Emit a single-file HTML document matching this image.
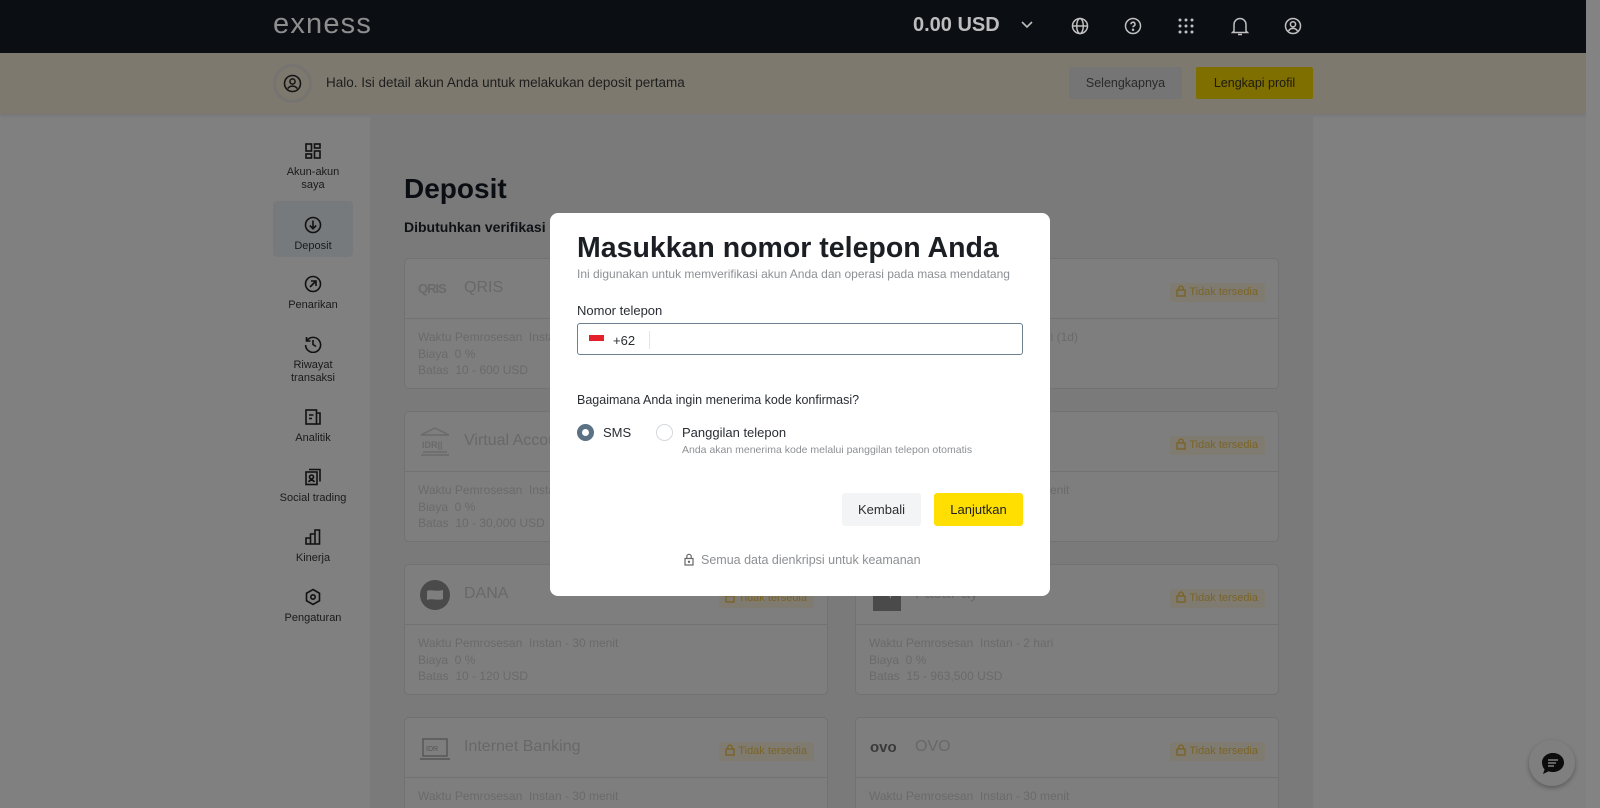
<!DOCTYPE html>
<html style="width:1600px;height:808px;overflow:hidden"><head><meta charset="utf-8"><style>
*{box-sizing:border-box;margin:0;padding:0}
body{width:1600px;height:808px;overflow:hidden;position:relative;background:#808080;font-family:"Liberation Sans",Arial,sans-serif}
.a{position:absolute}
.hdr{left:0;top:0;width:1586px;height:53px;background:#0b0e13}
.ban{left:0;top:53px;width:1586px;height:61px;background:#7d796f;box-shadow:0 2px 3px rgba(0,0,0,.08)}
.main{left:370px;top:114px;width:943px;height:694px;background:#7a7a7a}
.sb{left:1586px;top:0;width:14px;height:808px;background:#838383}
.nav{width:90px;left:268px;text-align:center;font-size:11px;color:#1a1a1a;line-height:13px}
.nav svg{display:block;margin:0 auto 6px}
.card{width:424px;height:131px;border:1px solid #727272;border-radius:5px;background:#7e7e7e}
.card .h{position:absolute;left:0;top:0;right:0;height:60px;border-bottom:1px solid #727272}
.card .t{position:absolute;left:59px;top:20px;font-size:16px;color:#686868}
.card .ic{position:absolute;left:13px;top:14px;width:34px;height:32px}
.card .b{position:absolute;left:13px;top:70px;font-size:12px;color:#6a6a6a;line-height:16.5px}
.tag{position:absolute;right:13px;top:24px;height:19px;padding:0 7px 0 6px;background:#7f7b70;border-radius:3px;color:#7a6428;font-size:11px;line-height:19px}
.tag svg{vertical-align:-2px;margin-right:3px}
.modal{left:550px;top:213px;width:500px;height:383px;background:#fff;border-radius:8px}
</style></head><body>
<div class="a hdr"></div>
<div class="a" style="left:273px;top:8px;font-size:29px;color:#8e8e8e;letter-spacing:1.2px">exness</div>
<div class="a" style="left:913px;top:14px;font-size:20px;font-weight:bold;color:#bdbdbd">0.00 USD</div>
<svg class="a" style="left:1020px;top:20px" width="14" height="10" viewBox="0 0 14 10"><path d="M2 2l5 5 5-5" fill="none" stroke="#bdbdbd" stroke-width="1.6"/></svg>
<svg class="a" style="left:1071px;top:17px" width="18" height="18" viewBox="0 0 18 18" fill="none" stroke="#c0c0c0" stroke-width="1.5"><circle cx="9" cy="9" r="7.5"/><ellipse cx="9" cy="9" rx="3.3" ry="7.5"/><path d="M1.5 9h15"/></svg>
<svg class="a" style="left:1124px;top:17px" width="18" height="18" viewBox="0 0 18 18" fill="none" stroke="#c0c0c0" stroke-width="1.5"><circle cx="9" cy="9" r="7.5"/><path d="M7 7.2a2 2 0 1 1 2.6 1.9c-.5.2-.6.6-.6 1.2"/><circle cx="9" cy="12.7" r=".5" fill="#c0c0c0"/></svg>
<svg class="a" style="left:1178px;top:18px" width="16" height="16" viewBox="0 0 16 16" fill="#c0c0c0"><circle cx="2" cy="2" r="1.5"/><circle cx="8" cy="2" r="1.5"/><circle cx="14" cy="2" r="1.5"/><circle cx="2" cy="8" r="1.5"/><circle cx="8" cy="8" r="1.5"/><circle cx="14" cy="8" r="1.5"/><circle cx="2" cy="14" r="1.5"/><circle cx="8" cy="14" r="1.5"/><circle cx="14" cy="14" r="1.5"/></svg>
<svg class="a" style="left:1231px;top:16px" width="18" height="20" viewBox="0 0 18 20" fill="none" stroke="#c0c0c0" stroke-width="1.5"><path d="M3 15V8.5a6 6 0 0 1 12 0V15l1.5 1.5h-15z"/><path d="M7 18.5h4"/></svg>
<svg class="a" style="left:1284px;top:17px" width="18" height="18" viewBox="0 0 18 18" fill="none" stroke="#c0c0c0" stroke-width="1.5"><circle cx="9" cy="9" r="7.5"/><circle cx="9" cy="7.3" r="2.6"/><path d="M4.5 14c1.2-2 2.7-2.6 4.5-2.6s3.3.6 4.5 2.6"/></svg>

<div class="a ban"></div>
<svg class="a" style="left:273px;top:64px" width="39" height="39" viewBox="0 0 39 39" fill="none"><circle cx="19.5" cy="19.5" r="18" stroke="#767470" stroke-width="3"/><circle cx="19.5" cy="19.5" r="8" stroke="#151515" stroke-width="1.6"/><circle cx="19.5" cy="17.5" r="2.6" stroke="#151515" stroke-width="1.5"/><path d="M14.8 24.5c1.3-1.8 2.8-2.4 4.7-2.4s3.4.6 4.7 2.4" stroke="#151515" stroke-width="1.5"/></svg>
<div class="a" style="left:326px;top:75px;font-size:13.5px;color:#1e1e1e">Halo. Isi detail akun Anda untuk melakukan deposit pertama</div>
<div class="a" style="left:1069px;top:67px;width:113px;height:32px;background:#757575;border-radius:2px;font-size:12.5px;color:#2a2a2a;text-align:center;line-height:32px">Selengkapnya</div>
<div class="a" style="left:1196px;top:67px;width:117px;height:32px;background:#7f6e00;border-radius:2px;font-size:12.5px;color:#1c1a10;text-align:center;line-height:32px">Lengkapi profil</div>

<div class="a main"></div>
<div class="a sb"></div>

<div class="a" style="left:273px;top:201px;width:80px;height:56px;background:#777a7d;border-radius:4px"></div>
<div class="a nav" style="top:142px"><svg width="18" height="18" viewBox="0 0 18 18" fill="none" stroke="#111" stroke-width="1.6"><rect x="2" y="2" width="5.5" height="7"/><rect x="10.5" y="2" width="5.5" height="4"/><rect x="2" y="12" width="5.5" height="4"/><rect x="10.5" y="9" width="5.5" height="7"/></svg>Akun-akun<br>saya</div>
<div class="a nav" style="top:216px"><svg width="18" height="18" viewBox="0 0 18 18" fill="none" stroke="#111" stroke-width="1.6"><circle cx="9" cy="9" r="7.5"/><path d="M9 4.5v8M5.8 9.5 9 12.7l3.2-3.2"/></svg>Deposit</div>
<div class="a nav" style="top:275px"><svg width="18" height="18" viewBox="0 0 18 18" fill="none" stroke="#111" stroke-width="1.6"><circle cx="9" cy="9" r="7.5"/><path d="M6 12l6-6M7 6h5v5"/></svg>Penarikan</div>
<div class="a nav" style="top:335px"><svg width="18" height="18" viewBox="0 0 18 18" fill="none" stroke="#111" stroke-width="1.6"><path d="M3 5.5A7.5 7.5 0 1 1 1.6 10"/><path d="M2.5 2v4h4"/><path d="M9 5v4.5l3 2"/></svg>Riwayat<br>transaksi</div>
<div class="a nav" style="top:408px"><svg width="18" height="18" viewBox="0 0 18 18" fill="none" stroke="#111" stroke-width="1.6"><rect x="2" y="2" width="10.5" height="14"/><path d="M12.5 5H16v11h-3.5M5 7h4.5M5 10.5h3"/></svg>Analitik</div>
<div class="a nav" style="top:468px"><svg width="18" height="18" viewBox="0 0 18 18" fill="none" stroke="#111" stroke-width="1.6"><rect x="2" y="4" width="11" height="12.5"/><path d="M5 1.5h11v12"/><circle cx="7.5" cy="9" r="2"/><path d="M4.5 14c.8-1.3 1.8-1.8 3-1.8s2.2.5 3 1.8"/></svg>Social trading</div>
<div class="a nav" style="top:528px"><svg width="18" height="18" viewBox="0 0 18 18" fill="none" stroke="#111" stroke-width="1.6"><path d="M2 16V10h4.5v6zM6.5 16V6H11v10zM11 16V2h4.5v14z"/></svg>Kinerja</div>
<div class="a nav" style="top:588px"><svg width="18" height="18" viewBox="0 0 18 18" fill="none" stroke="#111" stroke-width="1.6"><path d="M9 1.5l6.5 3.75v7.5L9 16.5l-6.5-3.75v-7.5z"/><circle cx="9" cy="9" r="2.2"/></svg>Pengaturan</div>

<div class="a" style="left:404px;top:173px;font-size:28px;font-weight:bold;color:#0a0d12">Deposit</div>
<div class="a" style="left:404px;top:219px;font-size:14px;font-weight:bold;color:#0e1115">Dibutuhkan verifikasi</div>

<div class="a" style="left:0;top:0;width:1600px;height:808px;overflow:hidden">
<div class="a card" style="left:404px;top:258px"><div class="h"></div><div class="ic" style="font-size:13px;font-weight:bold;color:#6a6a6a;top:22px;letter-spacing:-1px">QRIS</div><div class="t">QRIS</div><div class="b">Waktu Pemrosesan&nbsp; Instan - 30 menit<br>Biaya&nbsp; 0 %<br>Batas&nbsp; 10 - 600 USD</div></div>
<div class="a card" style="left:855px;top:258px"><div class="h"></div><div class="t">Transfer Bank (20)</div><div class="tag"><svg width="10" height="12" viewBox="0 0 10 12" fill="none" stroke="#7a6428" stroke-width="1.4"><rect x="1" y="5" width="8" height="6"/><path d="M2.8 5V3.3a2.2 2.2 0 0 1 4.4 0V5"/></svg>Tidak tersedia</div><div class="b">Waktu Pemrosesan&nbsp; Instan - 1 hari (1d)<br>Biaya&nbsp; 0 %<br>Batas&nbsp; 10 - 30,000 USD</div></div>

<div class="a card" style="left:404px;top:411px"><div class="h"></div><svg class="ic" viewBox="0 0 34 32" fill="none" stroke="#6a6a6a" stroke-width="1.4"><path d="M3 9L17 2l14 7z M3 29h28M5 26h24"/><text x="4" y="22" font-size="9" font-weight="bold" fill="#6a6a6a" stroke="none" font-family="Liberation Sans">IDR||</text></svg><div class="t">Virtual Account</div><div class="b">Waktu Pemrosesan&nbsp; Instan - 30 menit<br>Biaya&nbsp; 0 %<br>Batas&nbsp; 10 - 30,000 USD</div></div>
<div class="a card" style="left:855px;top:411px"><div class="h"></div><div class="t">Bank Transfer</div><div class="tag"><svg width="10" height="12" viewBox="0 0 10 12" fill="none" stroke="#7a6428" stroke-width="1.4"><rect x="1" y="5" width="8" height="6"/><path d="M2.8 5V3.3a2.2 2.2 0 0 1 4.4 0V5"/></svg>Tidak tersedia</div><div class="b">Waktu Pemrosesan&nbsp; Instan - 30 menit<br>Biaya&nbsp; 0 %<br>Batas&nbsp; 10 - 30,000 USD</div></div>

<div class="a card" style="left:404px;top:564px"><div class="h"></div><svg class="ic" viewBox="0 0 34 32"><circle cx="17" cy="16" r="15" fill="#4a4a4a"/><path d="M9 12c4-2 8 1 16-1v9c-6 2-10-1-16 1z" fill="#7e7e7e"/></svg><div class="t">DANA</div><div class="tag"><svg width="10" height="12" viewBox="0 0 10 12" fill="none" stroke="#7a6428" stroke-width="1.4"><rect x="1" y="5" width="8" height="6"/><path d="M2.8 5V3.3a2.2 2.2 0 0 1 4.4 0V5"/></svg>Tidak tersedia</div><div class="b">Waktu Pemrosesan&nbsp; Instan - 30 menit<br>Biaya&nbsp; 0 %<br>Batas&nbsp; 10 - 120 USD</div></div>
<div class="a card" style="left:855px;top:564px"><div class="h"></div><svg class="ic" viewBox="0 0 34 32"><rect x="4" y="6" width="28" height="26" fill="#4a4a4a"/><path d="M18 14l4-4v10z" fill="#7e7e7e"/></svg><div class="t">FasaPay</div><div class="tag"><svg width="10" height="12" viewBox="0 0 10 12" fill="none" stroke="#7a6428" stroke-width="1.4"><rect x="1" y="5" width="8" height="6"/><path d="M2.8 5V3.3a2.2 2.2 0 0 1 4.4 0V5"/></svg>Tidak tersedia</div><div class="b">Waktu Pemrosesan&nbsp; Instan - 2 hari<br>Biaya&nbsp; 0 %<br>Batas&nbsp; 15 - 963,500 USD</div></div>

<div class="a card" style="left:404px;top:717px"><div class="h"></div><svg class="ic" viewBox="0 0 34 32" fill="none" stroke="#555" stroke-width="1.4"><rect x="5" y="7" width="24" height="17"/><path d="M2 27h30"/><text x="8" y="19" font-size="7" fill="#555" stroke="none" font-family="Liberation Sans">IDR</text></svg><div class="t">Internet Banking</div><div class="tag"><svg width="10" height="12" viewBox="0 0 10 12" fill="none" stroke="#7a6428" stroke-width="1.4"><rect x="1" y="5" width="8" height="6"/><path d="M2.8 5V3.3a2.2 2.2 0 0 1 4.4 0V5"/></svg>Tidak tersedia</div><div class="b">Waktu Pemrosesan&nbsp; Instan - 30 menit<br>Biaya&nbsp; 0 %<br>Batas&nbsp; 10 - 120 USD</div></div>
<div class="a card" style="left:855px;top:717px"><div class="h"></div><div class="ic" style="font-size:15px;font-weight:bold;color:#3a3a3a;top:21px;left:14px">ovo</div><div class="t">OVO</div><div class="tag"><svg width="10" height="12" viewBox="0 0 10 12" fill="none" stroke="#7a6428" stroke-width="1.4"><rect x="1" y="5" width="8" height="6"/><path d="M2.8 5V3.3a2.2 2.2 0 0 1 4.4 0V5"/></svg>Tidak tersedia</div><div class="b">Waktu Pemrosesan&nbsp; Instan - 30 menit<br>Biaya&nbsp; 0 %<br>Batas&nbsp; 10 - 120 USD</div></div>
</div>

<div class="a" style="left:1529px;top:740px;width:46px;height:46px;border-radius:50%;background:#7f7f7f;box-shadow:0 2px 5px rgba(0,0,0,.3)"></div>
<svg class="a" style="left:1540px;top:750px" width="26" height="26" viewBox="0 0 26 26"><path d="M13 3c6 0 11 4 11 9.5S19 22 13 22c-1.5 0-3-.3-4.3-.8L3 24l1.6-4.6C3 17.7 2 15.2 2 12.5 2 7 7 3 13 3z" fill="#0c0c0c"/><path d="M8 10h10M8 13h8M8 16h6" stroke="#7f7f7f" stroke-width="1.4"/></svg>

<div class="a modal"></div>
<div class="a" style="left:577px;top:232px;font-size:28.5px;font-weight:bold;color:#1b1f24">Masukkan nomor telepon Anda</div>
<div class="a" style="left:577px;top:267px;font-size:12px;color:#8d9094">Ini digunakan untuk memverifikasi akun Anda dan operasi pada masa mendatang</div>
<div class="a" style="left:577px;top:303px;font-size:13px;color:#2a2e33">Nomor telepon</div>
<div class="a" style="left:577px;top:323px;width:446px;height:32px;border:1.5px solid #6e7f8f;border-radius:3px"></div>
<div class="a" style="left:589px;top:335px;width:15px;height:6px;background:#e4202a"></div>
<div class="a" style="left:613px;top:333px;font-size:13px;color:#2a2e33">+62</div>
<div class="a" style="left:649px;top:331px;width:1px;height:18px;background:#e2e4e6"></div>
<div class="a" style="left:577px;top:393px;font-size:12.5px;color:#2a2e33">Bagaimana Anda ingin menerima kode konfirmasi?</div>
<div class="a" style="left:577px;top:424px;width:17px;height:17px;border-radius:50%;border:5px solid #5b7184;background:#fff"></div>
<div class="a" style="left:603px;top:425px;font-size:13px;color:#2a2e33">SMS</div>
<div class="a" style="left:656px;top:424px;width:17px;height:17px;border-radius:50%;border:1px solid #d5d8db"></div>
<div class="a" style="left:682px;top:425px;font-size:13px;color:#2a2e33">Panggilan telepon</div>
<div class="a" style="left:682px;top:444px;font-size:10.5px;color:#8d9094">Anda akan menerima kode melalui panggilan telepon otomatis</div>
<div class="a" style="left:842px;top:493px;width:79px;height:33px;background:#f3f4f5;border-radius:3px;font-size:13px;color:#2a2e33;text-align:center;line-height:33px">Kembali</div>
<div class="a" style="left:934px;top:493px;width:89px;height:33px;background:#ffde02;border-radius:3px;font-size:13px;color:#1b1f24;text-align:center;line-height:33px">Lanjutkan</div>
<svg class="a" style="left:684px;top:553px" width="10" height="13" viewBox="0 0 10 13" fill="none" stroke="#666" stroke-width="1.2"><rect x="1" y="5.5" width="8" height="6.5"/><path d="M2.8 5.5V3.5a2.2 2.2 0 0 1 4.4 0v2"/><circle cx="5" cy="8.8" r=".6" fill="#666"/></svg>
<div class="a" style="left:701px;top:553px;font-size:12.5px;color:#8d9094">Semua data dienkripsi untuk keamanan</div>
</body></html>
